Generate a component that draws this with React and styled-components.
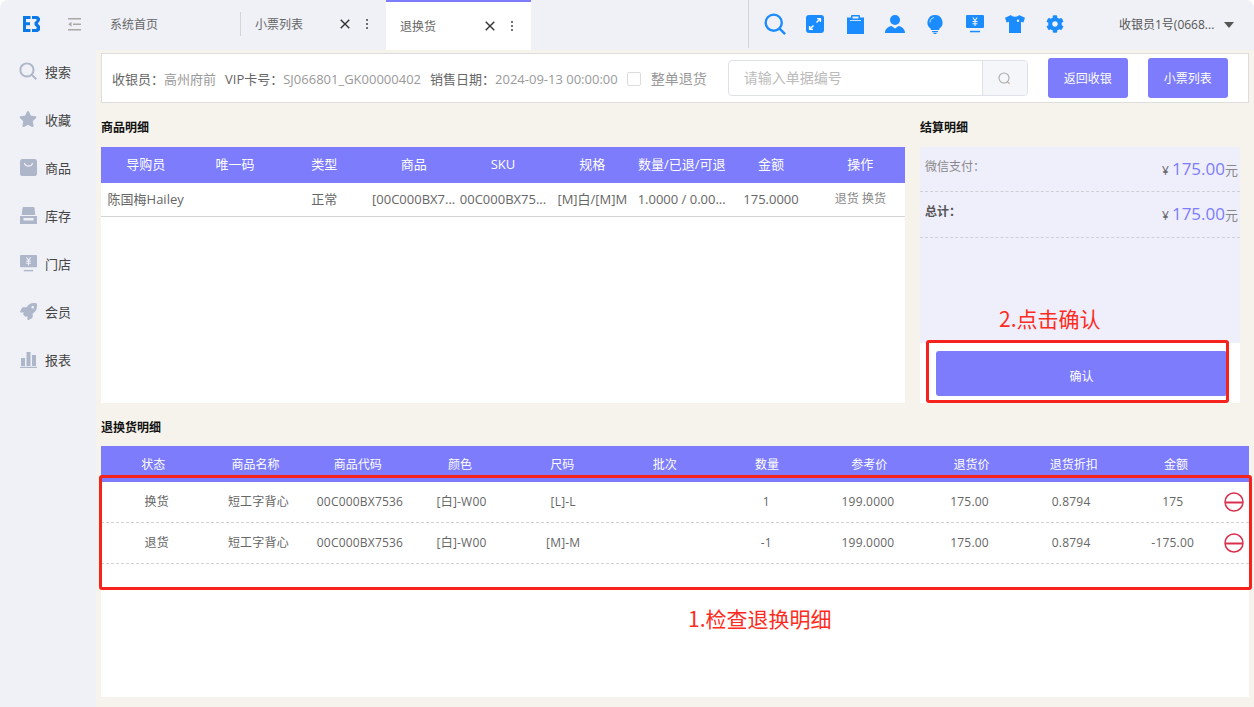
import React from "react";
import styled, { createGlobalStyle } from "styled-components";
import { FaCog, FaRocket, FaStar } from "react-icons/fa";

const PURPLE = "#7c7cfd";

const GlobalStyle = createGlobalStyle`
  html, body {
    margin: 0;
    padding: 0;
    background: #fff;
  }
  body {
    font-family: "Open Sans", "Noto Sans CJK SC", sans-serif;
    font-size: 13px;
    color: #666;
  }
  * {
    box-sizing: border-box;
  }
`;

const Shell = styled.div`
  position: relative;
  width: 1254px;
  height: 707px;
  display: flex;
  flex-direction: column;
  overflow: hidden;
  background: #f0f1f6;
  border-radius: 8px 8px 0 0;
`;

const TopBar = styled.header`
  height: 50px;
  display: flex;
  flex: none;
`;

const Brand = styled.div`
  width: 96px;
  display: flex;
  align-items: center;
  padding: 0 0 2px 23px;
  gap: 28px;
`;

const Tab = styled.div`
  width: 145px;
  height: ${(p) => (p.$active ? "50px" : "48px")};
  display: flex;
  align-items: center;
  padding: 2px 14px 0;
  font-size: 12px;
  line-height: 16px;
  color: #666;
  background: ${(p) => (p.$active ? "#fff" : "transparent")};
  border-top: ${(p) => (p.$active ? `2px solid ${PURPLE}` : "0")};
`;

const TabDivider = styled.span`
  width: 1px;
  height: 24px;
  margin: 12px 0 0 -1px;
  background: #d4d5da;
  flex: none;
`;

const TabLabel = styled.span`
  flex: 1;
`;

const TabClose = styled.span`
  width: 10px;
  height: 10px;
  margin: -3px 0 0 auto;
  color: #333;
  display: flex;
`;

const TabMore = styled.span`
  display: flex;
  flex-direction: column;
  gap: 2px;
  margin: -3px 4px 0 16px;
  i {
    width: 2px;
    height: 2px;
    border-radius: 50%;
    background: #444;
  }
`;

const Tools = styled.div`
  margin-left: 217px;
  height: 48px;
  padding-left: 6px;
  border-left: 1px solid #d4d5da;
  display: flex;
  align-items: center;
`;

const ToolButton = styled.span`
  width: 40px;
  display: flex;
  justify-content: center;
  color: #1a8cff;
  svg {
    display: block;
  }
`;

const UserBox = styled.div`
  margin-left: 44px;
  display: flex;
  align-items: center;
  font-size: 12px;
  line-height: 16px;
  color: #555;
`;

const Caret = styled.span`
  width: 0;
  height: 0;
  margin-left: 10px;
  border-left: 5.5px solid transparent;
  border-right: 5.5px solid transparent;
  border-top: 6px solid #555;
`;

const Body = styled.div`
  flex: 1;
  display: flex;
  min-height: 0;
`;

const SideNav = styled.nav`
  width: 96px;
  flex: none;
  padding: 9px 0 0 19px;
  display: flex;
  flex-direction: column;
  gap: 24px;
`;

const NavItem = styled.a`
  height: 24px;
  display: flex;
  align-items: center;
  gap: 8px;
  font-size: 13px;
  color: #444;
`;

const NavIcon = styled.span`
  width: 18px;
  height: 18px;
  display: flex;
  align-items: center;
  justify-content: center;
  color: #aeb6ca;
`;

const Main = styled.main`
  flex: 1;
  min-width: 0;
  padding: 3px 5px 10px;
  background: #f6f3ec;
  display: flex;
  flex-direction: column;
`;

const Toolbar = styled.div`
  height: 50px;
  flex: none;
  display: flex;
  align-items: center;
  padding-left: 10px;
  background: #fff;
  border: 1px solid #dddddd;
  line-height: 18px;
`;

const InfoItem = styled.span`
  margin: 2px 9px 0 0;
  white-space: nowrap;
  color: #666;
  b {
    font-weight: 400;
    color: #999;
  }
`;

const CheckBox = styled.span`
  width: 14px;
  height: 14px;
  margin: 2px 10px 0 0;
  border: 1px solid #dcdcdc;
  border-radius: 2px;
  background: #fff;
  flex: none;
`;

const CheckLabel = styled.span`
  margin-top: 2px;
  font-size: 14px;
  color: #999;
  white-space: nowrap;
`;

const SearchGroup = styled.div`
  width: 300px;
  height: 36px;
  margin-left: 21px;
  display: flex;
  border: 1px solid #dfe1e8;
  border-radius: 4px;
  overflow: hidden;
`;

const SearchInput = styled.div`
  flex: 1;
  display: flex;
  align-items: center;
  padding-left: 15px;
  font-size: 14px;
  color: #bbb;
`;

const SearchAddon = styled.div`
  width: 45px;
  display: flex;
  align-items: center;
  justify-content: center;
  background: #f5f6fa;
  border-left: 1px solid #dfe1e8;
`;

const ActionButton = styled.button`
  width: 80px;
  height: 40px;
  margin-left: 20px;
  padding: 2px 0 0;
  border: 0;
  border-radius: 3px;
  font: inherit;
  font-size: 12px;
  color: #fff;
  background: ${PURPLE};
`;

const SectionTitle = styled.h3`
  margin: 0;
  height: ${(p) => (p.$short ? "43px" : "44px")};
  padding-top: 17px;
  font-size: 12px;
  line-height: 16px;
  font-weight: 700;
  color: #111;
`;

const TopRow = styled.div`
  display: grid;
  grid-template-columns: 804px 320px;
  column-gap: 15px;
`;

const Column = styled.section`
  display: flex;
  flex-direction: column;
`;

const WhitePanel = styled.div`
  height: 256px;
  background: #fff;
`;

const GoodsRow = styled.div`
  display: grid;
  grid-template-columns: repeat(9, 1fr);
  align-items: center;
  text-align: center;
  height: ${(p) => (p.$head ? "36px" : "34px")};
  padding-bottom: 2px;
  background: ${(p) => (p.$head ? PURPLE : "#fff")};
  color: ${(p) => (p.$head ? "#fff" : "#666")};
  border-bottom: ${(p) => (p.$head ? "0" : "1px solid #d4d4d4")};
  line-height: 18px;
`;

const Cell = styled.span`
  display: block;
  min-width: 0;
  white-space: nowrap;
`;

const MutedCell = styled(Cell)`
  font-size: 12px;
  color: #888;
`;

const PayPanel = styled.div`
  height: 256px;
  display: flex;
  flex-direction: column;
  background: #fff;
`;

const PayList = styled.div`
  flex: 1;
  background: #efeffc;
`;

const PayRow = styled.div`
  height: ${(p) => (p.$total ? "46px" : "45px")};
  padding: 7px 2px 0 5px;
  display: flex;
  justify-content: space-between;
  border-bottom: 1px dashed #cfcfd6;
  font-size: 12px;
  line-height: 18px;
  color: ${(p) => (p.$total ? "#555" : "#888")};
  font-weight: ${(p) => (p.$total ? 700 : 400)};
`;

const PayLabel = styled.span`
  margin-top: 4px;
`;

const Amount = styled.span`
  display: flex;
  align-items: baseline;
  margin-top: 2px;
  font-weight: 400;
  line-height: 26px;
  color: #666;
  font-size: 12px;
  em {
    font-style: normal;
    font-size: 17px;
    margin-left: 3px;
    color: ${PURPLE};
  }
  small {
    font-size: 13px;
    color: #888;
  }
`;

const PayFooter = styled.div`
  height: 60px;
  padding: 8px 13px 7px 16px;
`;

const ConfirmButton = styled.button`
  width: 100%;
  height: 100%;
  padding: 4px 0 0;
  border: 0;
  border-radius: 3px;
  font: inherit;
  font-size: 12px;
  color: #fff;
  background: ${PURPLE};
`;

const ReturnTable = styled.div`
  flex: 1;
  background: #fff;
`;

const ReturnHead = styled.div`
  height: 36px;
  display: grid;
  grid-template-columns: repeat(11, 102.3px) 1fr;
  align-items: center;
  text-align: center;
  padding: 2px 0 0 1px;
  font-size: 12px;
  line-height: 16px;
  color: #fff;
  background: ${PURPLE};
`;

const ReturnRow = styled.div`
  height: 41px;
  display: grid;
  grid-template-columns: repeat(11, 101.6px) 1fr;
  align-items: center;
  text-align: center;
  padding-left: 5px;
  font-size: 12px;
  letter-spacing: 0.2px;
  line-height: 16px;
  color: #666;
  border-bottom: 1px dashed #d2d2d2;
`;

const RemoveIcon = styled.span`
  display: flex;
  justify-content: flex-end;
  padding-right: 5px;
  color: #d8304c;
  svg {
    display: block;
  }
`;

const Annotation = styled.div`
  position: absolute;
  left: ${(p) => p.$x}px;
  top: ${(p) => p.$y}px;
  font-family: "Noto Sans CJK SC", sans-serif;
  font-size: 21px;
  line-height: 28px;
  color: #ff2a20;
  white-space: nowrap;
`;

const RedBox = styled.div`
  position: absolute;
  left: ${(p) => p.$x}px;
  top: ${(p) => p.$y}px;
  width: ${(p) => p.$w}px;
  height: ${(p) => p.$h}px;
  border: 3px solid #f5231c;
  border-radius: 3px;
`;

const Logo = () => (
  <svg width="17" height="16" viewBox="0 0 17 16">
    <path d="M0 0h7.5v3H3v3.2h4v3H3V13h4.5v3H0z" fill="#0a78e6" />
    <path
      d="M9 0h4.5a3.4 3.4 0 0 1 2.4 5.9L14.8 7.6l1.2 1.3A4 4 0 0 1 13 16H9v-3h3.6a1.2 1.2 0 0 0 .8-2L11.5 9V6.6l1.9-2a.9.9 0 0 0-.6-1.6H9z"
      fill="#0a78e6"
    />
  </svg>
);

const CollapseIcon = () => (
  <svg width="13" height="13" viewBox="0 0 13 13" fill="#a8a8a8">
    <rect y="0" width="13" height="1.5" />
    <rect x="5" y="5.5" width="8" height="1.5" />
    <rect y="11" width="13" height="1.5" />
    <path d="M3.5 3.7v5L0.3 6.2z" />
  </svg>
);

const CloseIcon = () => (
  <svg width="10" height="10" viewBox="0 0 10 10">
    <path d="M.7.7l8.6 8.6M9.3.7L.7 9.3" stroke="currentColor" strokeWidth="1.4" />
  </svg>
);

const SearchGlyph = ({ size = 22, width = 2.6 }) => (
  <svg width={size} height={size} viewBox="0 0 24 24" fill="none" stroke="currentColor">
    <circle cx="10.6" cy="10.6" r="8.8" strokeWidth={width} />
    <path d="M17 17l6 6" strokeWidth={width} />
  </svg>
);

const ExpandGlyph = () => (
  <svg width="18" height="18" viewBox="0 0 18 18">
    <rect width="18" height="18" rx="3" fill="currentColor" />
    <path
      d="M10.5 7.5l3.5-3.5M11 3.6h3.4V7M7.5 10.5L4 14M3.6 11v3.4H7"
      stroke="#fff"
      strokeWidth="1.4"
      fill="none"
    />
  </svg>
);

const ClipboardGlyph = () => (
  <svg width="17" height="19" viewBox="0 0 17 19" fill="currentColor">
    <path d="M0 2.5h4V1a1 1 0 0 1 1-1h7a1 1 0 0 1 1 1v1.5h4V19H0z" />
    <rect x="5.5" y="1.5" width="6" height="2" fill="#f0f1f6" />
    <rect x="3" y="5" width="11" height="1" fill="#cfe5ff" />
  </svg>
);

const UserGlyph = () => (
  <svg width="20" height="18" viewBox="0 0 20 18" fill="currentColor">
    <circle cx="10" cy="5" r="5" />
    <path d="M0 18c0-4 3-6.500 6.500-7L10 13.500 13.500 11c3.500.5 6.500 3 6.500 7z" />
  </svg>
);

const BulbGlyph = () => (
  <svg width="16" height="19" viewBox="0 0 16 19" fill="currentColor">
    <path d="M8 0a7.500 7.500 0 0 1 4.200 13.700V15H3.800v-1.300A7.500 7.500 0 0 1 8 0z" />
    <rect x="5" y="16" width="6" height="1.200" />
    <rect x="6.500" y="17.800" width="3" height="1.200" />
    <path d="M3 7.500A5 5 0 0 1 7 2.600" stroke="#cfe5ff" strokeWidth="1" fill="none" />
  </svg>
);

const ScreenGlyph = ({ size = 18 }) => (
  <svg width={size} height={size} viewBox="0 0 18 18" fill="currentColor">
    <rect y="0" width="18" height="13" rx="1" />
    <rect x="4" y="15.800" width="10" height="1.500" />
    <path
      d="M6.800 2.500L9 5.500l2.200-3M9 5.500V11M6.500 6.500h5M6.500 8.800h5"
      stroke="#f0f1f6"
      strokeWidth="1.100"
      fill="none"
    />
  </svg>
);

const ShirtGlyph = () => (
  <svg width="20" height="18" viewBox="0 0 20 18" fill="currentColor">
    <path d="M6 0L0 2.800l1.600 4.700L4 6.800V18h12V6.800l2.400.7L20 2.800 14 0c-.8 2.300-7.200 2.300-8 0z" />
    <circle cx="13" cy="5.800" r="1.200" fill="#f0f1f6" />
  </svg>
);

const BagGlyph = () => (
  <svg width="17" height="17" viewBox="0 0 17 17">
    <rect width="17" height="17" rx="2.500" fill="currentColor" />
    <path d="M4.500 4c.5 4 7.500 4 8 0" stroke="#f0f1f6" strokeWidth="1.300" fill="none" />
  </svg>
);

const InboxGlyph = () => (
  <svg width="17" height="17" viewBox="0 0 17 17" fill="currentColor">
    <path d="M3.500 0h10a1 1 0 0 1 1 1l.8 7H1.700l.8-7a1 1 0 0 1 1-1z" />
    <path d="M0 9h17v8H0z" />
    <rect x="3.500" y="11" width="10" height="2.500" fill="#f0f1f6" />
  </svg>
);

const BarsGlyph = () => (
  <svg width="17" height="17" viewBox="0 0 17 17" fill="currentColor">
    <rect x="1" y="7" width="4" height="8" />
    <rect x="6.500" y="1" width="4" height="14" />
    <rect x="12" y="4" width="4" height="11" />
    <rect y="15.800" width="17" height="1.200" />
  </svg>
);

const MinusCircle = () => (
  <svg width="20" height="20" viewBox="0 0 20 20" fill="none" stroke="currentColor">
    <circle cx="10" cy="10" r="9" strokeWidth="1.500" />
    <path d="M1.500 10.500h17" strokeWidth="2" />
  </svg>
);

const toolIcons = [
  <SearchGlyph key="search" />,
  <ExpandGlyph key="expand" />,
  <ClipboardGlyph key="clip" />,
  <UserGlyph key="user" />,
  <BulbGlyph key="bulb" />,
  <ScreenGlyph key="screen" />,
  <ShirtGlyph key="shirt" />,
  <FaCog key="cog" size={18} />,
];

const navItems = [
  ["搜索", <SearchGlyph size={18} width={2.6} />],
  ["收藏", <FaStar size={18} />],
  ["商品", <BagGlyph />],
  ["库存", <InboxGlyph />],
  ["门店", <ScreenGlyph size={17} />],
  ["会员", <FaRocket size={17} />],
  ["报表", <BarsGlyph />],
];

const goodsHead = ["导购员", "唯一码", "类型", "商品", "SKU", "规格", "数量/已退/可退", "金额", "操作"];

const returnHead = ["状态", "商品名称", "商品代码", "颜色", "尺码", "批次", "数量", "参考价", "退货价", "退货折扣", "金额"];

const returnRows = [
  ["换货", "短工字背心", "00C000BX7536", "[白]-W00", "[L]-L", "", "1", "199.0000", "175.00", "0.8794", "175"],
  ["退货", "短工字背心", "00C000BX7536", "[白]-W00", "[M]-M", "", "-1", "199.0000", "175.00", "0.8794", "-175.00"],
];

const TabMenu = () => (
  <TabMore>
    <i />
    <i />
    <i />
  </TabMore>
);

const App = () => (
  <Shell>
    <GlobalStyle />
    <TopBar>
      <Brand>
        <Logo />
        <CollapseIcon />
      </Brand>
      <Tab>
        <TabLabel>系统首页</TabLabel>
      </Tab>
      <TabDivider />
      <Tab>
        <TabLabel>小票列表</TabLabel>
        <TabClose>
          <CloseIcon />
        </TabClose>
        <TabMenu />
      </Tab>
      <Tab $active>
        <TabLabel>退换货</TabLabel>
        <TabClose>
          <CloseIcon />
        </TabClose>
        <TabMenu />
      </Tab>
      <Tools>
        {toolIcons.map((icon, i) => (
          <ToolButton key={i}>{icon}</ToolButton>
        ))}
      </Tools>
      <UserBox>
        收银员1号(0668...
        <Caret />
      </UserBox>
    </TopBar>
    <Body>
      <SideNav>
        {navItems.map(([label, icon]) => (
          <NavItem key={label}>
            <NavIcon>{icon}</NavIcon>
            {label}
          </NavItem>
        ))}
      </SideNav>
      <Main>
        <Toolbar>
          <InfoItem>
            收银员：<b>高州府前</b>
          </InfoItem>
          <InfoItem>
            VIP卡号：<b>SJ066801_GK00000402</b>
          </InfoItem>
          <InfoItem>
            销售日期：<b>2024-09-13 00:00:00</b>
          </InfoItem>
          <CheckBox />
          <CheckLabel>整单退货</CheckLabel>
          <SearchGroup>
            <SearchInput>请输入单据编号</SearchInput>
            <SearchAddon>
              <svg width="13" height="13" viewBox="0 0 13 13" fill="none" stroke="#aaa">
                <circle cx="6" cy="6" r="5" strokeWidth="1.100" />
                <path d="M9.500 9.800l2 2" stroke="#c9a08a" strokeWidth="1.100" />
              </svg>
            </SearchAddon>
          </SearchGroup>
          <ActionButton>返回收银</ActionButton>
          <ActionButton>小票列表</ActionButton>
        </Toolbar>
        <TopRow>
          <Column>
            <SectionTitle>商品明细</SectionTitle>
            <WhitePanel>
              <GoodsRow $head>
                {goodsHead.map((h) => (
                  <Cell key={h}>{h}</Cell>
                ))}
              </GoodsRow>
              <GoodsRow>
                <Cell>陈国梅Hailey</Cell>
                <Cell />
                <Cell>正常</Cell>
                <Cell>[00C000BX7...</Cell>
                <Cell>00C000BX75...</Cell>
                <Cell>[M]白/[M]M</Cell>
                <Cell>1.0000 / 0.00...</Cell>
                <Cell>175.0000</Cell>
                <MutedCell>退货 换货</MutedCell>
              </GoodsRow>
            </WhitePanel>
          </Column>
          <Column>
            <SectionTitle>结算明细</SectionTitle>
            <PayPanel>
              <PayList>
                <PayRow>
                  <PayLabel>微信支付：</PayLabel>
                  <Amount>
                    ¥<em>175.00</em>
                    <small>元</small>
                  </Amount>
                </PayRow>
                <PayRow $total>
                  <PayLabel>总计：</PayLabel>
                  <Amount>
                    ¥<em>175.00</em>
                    <small>元</small>
                  </Amount>
                </PayRow>
              </PayList>
              <PayFooter>
                <ConfirmButton>确认</ConfirmButton>
              </PayFooter>
            </PayPanel>
          </Column>
        </TopRow>
        <SectionTitle $short>退换货明细</SectionTitle>
        <ReturnTable>
          <ReturnHead>
            {returnHead.map((h) => (
              <span key={h}>{h}</span>
            ))}
            <span />
          </ReturnHead>
          {returnRows.map((row) => (
            <ReturnRow key={row[0]}>
              {row.map((value, i) => (
                <span key={i}>{value}</span>
              ))}
              <RemoveIcon>
                <MinusCircle />
              </RemoveIcon>
            </ReturnRow>
          ))}
        </ReturnTable>
      </Main>
    </Body>
    <RedBox $x={926} $y={340} $w={303} $h={63} />
    <RedBox $x={99} $y={475} $w={1153} $h={115} />
    <Annotation $x={999} $y={304}>
      2.点击确认
    </Annotation>
    <Annotation $x={688} $y={604}>
      1.检查退换明细
    </Annotation>
  </Shell>
);

export default App;
